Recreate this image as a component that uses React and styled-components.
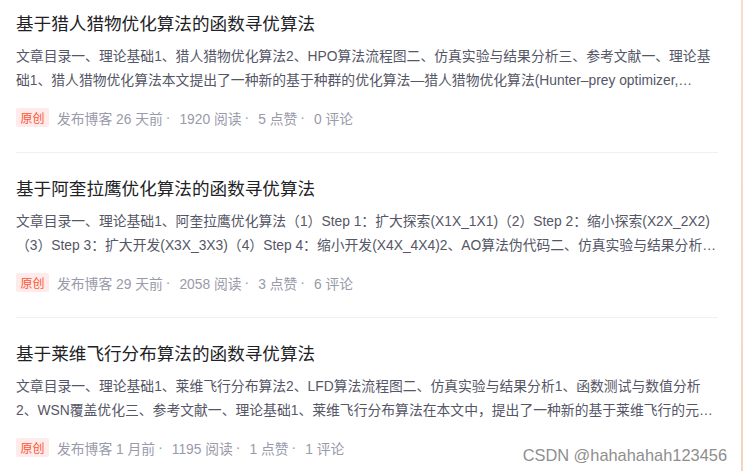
import React from 'react';
import styled, { createGlobalStyle } from 'styled-components';

const GlobalStyle = createGlobalStyle`
  html, body {
    margin: 0;
    padding: 0;
    background: #fff;
  }
  body {
    font-family: "Liberation Sans", "Noto Sans CJK SC", sans-serif;
  }
`;

const posts = [
  {
    id: 1,
    title: '基于猎人猎物优化算法的函数寻优算法',
    desc: '文章目录一、理论基础1、猎人猎物优化算法2、HPO算法流程图二、仿真实验与结果分析三、参考文献一、理论基础1、猎人猎物优化算法本文提出了一种新的基于种群的优化算法—猎人猎物优化算法(Hunter–prey optimizer, HPO)，该算法的灵感来自于猎人与猎物之间的捕食行为。',
    when: '26 天前',
    views: 1920,
    likes: 5,
    comments: 0,
  },
  {
    id: 2,
    title: '基于阿奎拉鹰优化算法的函数寻优算法',
    desc: '文章目录一、理论基础1、阿奎拉鹰优化算法（1）Step 1：扩大探索(X1X_1X1)（2）Step 2：缩小探索(X2X_2X2)（3）Step 3：扩大开发(X3X_3X3)（4）Step 4：缩小开发(X4X_4X4)2、AO算法伪代码二、仿真实验与结果分析三、参考文献一、理论基础',
    when: '29 天前',
    views: 2058,
    likes: 3,
    comments: 6,
  },
  {
    id: 3,
    title: '基于莱维飞行分布算法的函数寻优算法',
    desc: '文章目录一、理论基础1、莱维飞行分布算法2、LFD算法流程图二、仿真实验与结果分析1、函数测试与数值分析2、WSN覆盖优化三、参考文献一、理论基础1、莱维飞行分布算法在本文中，提出了一种新的基于莱维飞行的元启发式算法，称为莱维飞行分布算法。',
    when: '1 月前',
    views: 1195,
    likes: 1,
    comments: 1,
  },
];

const PostList = () => (
  <Page>
    <GlobalStyle />
    <List>
      {posts.map(post => (
        <Item key={post.id}>
          <Title>{post.title}</Title>
          <Desc>{post.desc}</Desc>
          <Meta>
            <Badge>原创</Badge>
            <MetaText>发布博客 {post.when}</MetaText>
            <Dot>·</Dot>
            <MetaText>{post.views} 阅读</MetaText>
            <Dot>·</Dot>
            <MetaText>{post.likes} 点赞</MetaText>
            <Dot>·</Dot>
            <MetaText>{post.comments} 评论</MetaText>
          </Meta>
        </Item>
      ))}
    </List>
    <EdgeStrip />
    <Watermark>CSDN @hahahahah123456</Watermark>
  </Page>
);

const Page = styled.div`
  position: relative;
  display: flex;
  justify-content: space-between;
  width: 743px;
  height: 471px;
  overflow: hidden;
  background: #fff;
`;

const List = styled.div`
  width: 702px;
  margin-left: 16px;
`;

const Item = styled.div`
  padding: 23px 0 24px;
  border-bottom: 1px solid #f0f0f2;

  &:first-child {
    padding-top: 10.5px;
  }
`;

const Title = styled.div`
  font-size: 17.6px;
  line-height: 26px;
  color: #222226;
  white-space: nowrap;
  overflow: hidden;
  text-overflow: ellipsis;
`;

const Desc = styled.div`
  margin-top: 7px;
  font-size: 13.82px;
  line-height: 24px;
  color: #555666;
  display: -webkit-box;
  -webkit-box-orient: vertical;
  -webkit-line-clamp: 2;
  overflow: hidden;
`;

const Meta = styled.div`
  display: flex;
  align-items: center;
  height: 20px;
  margin-top: 16px;
  font-size: 13.8px;
  color: #999aaa;
`;

const Badge = styled.span`
  display: inline-flex;
  align-items: center;
  justify-content: center;
  width: 33px;
  height: 19px;
  margin-right: 8px;
  border-radius: 2px;
  background: #ffebeb;
  color: #fc5531;
  font-size: 12px;
`;

const MetaText = styled.span`
  white-space: nowrap;
`;

const Dot = styled.span`
  margin: 0 9px 0 3px;
`;

const EdgeStrip = styled.div`
  width: 2px;
  background: linear-gradient(#f7dccd, #f5d3c0);
`;

const Watermark = styled.div`
  position: absolute;
  right: 16px;
  top: 444px;
  font-size: 16.4px;
  line-height: 22px;
  color: #8e8e8e;
  white-space: nowrap;
`;

export default PostList;
